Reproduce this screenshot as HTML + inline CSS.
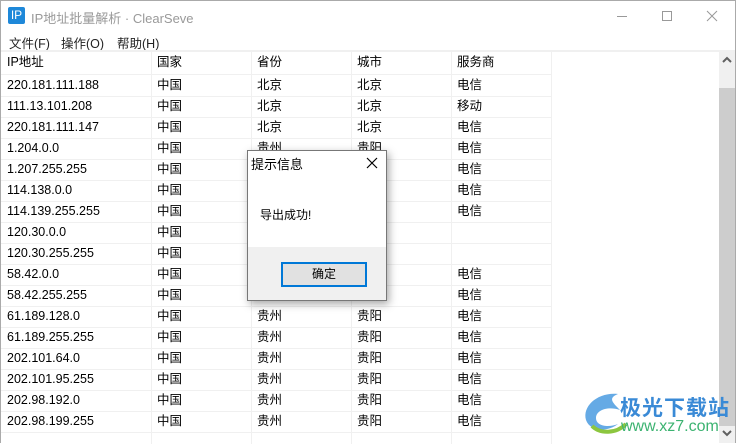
<!DOCTYPE html>
<html><head><meta charset="utf-8"><style>
*{margin:0;padding:0;box-sizing:border-box}
body{width:736px;height:443px;overflow:hidden;background:#fff;font-family:"Liberation Sans","Microsoft YaHei","Noto Sans CJK SC",sans-serif;font-size:12.5px;color:#000;position:relative}
.abs{position:absolute}
.title{left:0;top:0;width:736px;height:31px;border:1px solid #aaa;border-bottom:none}
.menu{top:31px;left:0;width:736px;height:19px;border-left:1px solid #aaa;border-right:1px solid #aaa}
.menu span{position:absolute;top:2px;font-size:12.5px;color:#222}
.grid{left:1px;top:52px;width:718px;height:391px;background:#fff}
.vl{position:absolute;top:0;width:1px;height:392px;background:#f0f0f0}
.hl{position:absolute;left:0;width:551px;height:1px;background:#f0f0f0}
.cell{position:absolute;height:21px;line-height:21px;white-space:nowrap}
</style></head><body>
<div class="abs title">
 <div class="abs" style="left:7px;top:6px;width:17px;height:17px;background:#1e88d9;color:#fff;font-size:12px;line-height:17px;text-align:center;border-radius:2px">IP</div>
 <div class="abs" style="left:30px;top:7px;font-size:13px;color:#999">IP地址批量解析 · ClearSeve</div>
 <div class="abs" style="left:616px;top:15px;width:10px;height:1px;background:#999"></div>
 <div class="abs" style="left:661px;top:10px;width:10px;height:10px;border:1px solid #999"></div>
 <svg class="abs" style="left:705px;top:9px" width="12" height="12"><path d="M1 1L11 11M11 1L1 11" stroke="#999" stroke-width="1"/></svg>
</div>
<div class="abs menu">
 <span style="left:8px">文件(F)</span><span style="left:60px">操作(O)</span><span style="left:116px">帮助(H)</span>
</div>
<div class="abs" style="left:0;top:50px;width:736px;height:2px;background:#f0f0f0"></div>
<div class="abs grid" id="g"></div>
<div class="abs" style="left:719px;top:50px;width:16px;height:393px;background:#f0f0f0"></div>
<div class="abs" style="left:719px;top:88px;width:16px;height:338px;background:#cdcdcd"></div>
<svg class="abs" style="left:721px;top:56px" width="12" height="8"><path d="M2 6L6 2L10 6" stroke="#606060" stroke-width="2" fill="none"/></svg>
<svg class="abs" style="left:721px;top:429px" width="12" height="8"><path d="M2 2L6 6L10 2" stroke="#606060" stroke-width="2" fill="none"/></svg>
<div class="abs" style="left:735px;top:0;width:1px;height:443px;background:#aaa"></div>
<div class="abs" style="left:0;top:0;width:1px;height:443px;background:#aaa"></div>

<!-- watermark -->
<svg class="abs" style="left:578px;top:388px" width="60" height="50"><path d="M40 6C20 4 4 18 8 32C12 44 30 44 40 36C30 40 18 38 18 30C18 22 30 18 42 22C34 14 30 10 40 6Z" fill="#4a9be0" opacity=".85"/><path d="M14 38C22 46 38 46 48 36" stroke="#8cc63f" stroke-width="4" fill="none"/></svg>
<div class="abs" style="left:620px;top:392px;font-size:21px;font-weight:bold;color:#3a8ad6;letter-spacing:1px;font-family:'Noto Sans CJK SC',sans-serif">极光下载站</div>
<div class="abs" style="left:621px;top:418px;font-size:16px;color:#3cb371">www.xz7.com</div>

<!-- dialog -->
<div class="abs" style="left:247px;top:150px;width:140px;height:151px;background:#fff;border:1px solid #777;box-shadow:2px 3px 8px rgba(0,0,0,.35)">
 <div class="abs" style="left:3px;top:3px;font-size:13px">提示信息</div>
 <svg class="abs" style="left:118px;top:6px" width="12" height="12"><path d="M1 1L11 11M11 1L1 11" stroke="#000" stroke-width="1.2"/></svg>
 <div class="abs" style="left:12px;top:55px;font-size:12px">导出成功!</div>
 <div class="abs" style="left:0;top:96px;width:138px;height:53px;background:#f0f0f0"></div>
 <div class="abs" style="left:33px;top:111px;width:86px;height:25px;border:2px solid #0078d7;background:#e1e1e1;text-align:center;line-height:21px;font-size:12px">确定</div>
</div>
<script>
var rows=[["220.181.111.188","北京","北京","电信"],["111.13.101.208","北京","北京","移动"],["220.181.111.147","北京","北京","电信"],["1.204.0.0","贵州","贵阳","电信"],["1.207.255.255","贵州","贵阳","电信"],["114.138.0.0","贵州","贵阳","电信"],["114.139.255.255","贵州","贵阳","电信"],["120.30.0.0","","",""],["120.30.255.255","","",""],["58.42.0.0","贵州","贵阳","电信"],["58.42.255.255","贵州","贵阳","电信"],["61.189.128.0","贵州","贵阳","电信"],["61.189.255.255","贵州","贵阳","电信"],["202.101.64.0","贵州","贵阳","电信"],["202.101.95.255","贵州","贵阳","电信"],["202.98.192.0","贵州","贵阳","电信"],["202.98.199.255","贵州","贵阳","电信"]];
var g=document.getElementById('g'),h='';
[150,250,350,450,550].forEach(function(x){h+='<div class="vl" style="left:'+x+'px"></div>'});
var xs=[6,156,256,356,456];
function row(y,c){for(var i=0;i<5;i++)h+='<div class="cell" style="left:'+xs[i]+'px;top:'+y+'px">'+c[i]+'</div>';}
row(0,["IP地址","国家","省份","城市","服务商"]);
h+='<div class="hl" style="top:22px"></div>';
for(var r=0;r<rows.length;r++){var y=23+21*r;row(y,[rows[r][0],"中国",rows[r][1],rows[r][2],rows[r][3]]);h+='<div class="hl" style="top:'+(y+21)+'px"></div>';}
g.innerHTML=h;
</script>
</body></html>
